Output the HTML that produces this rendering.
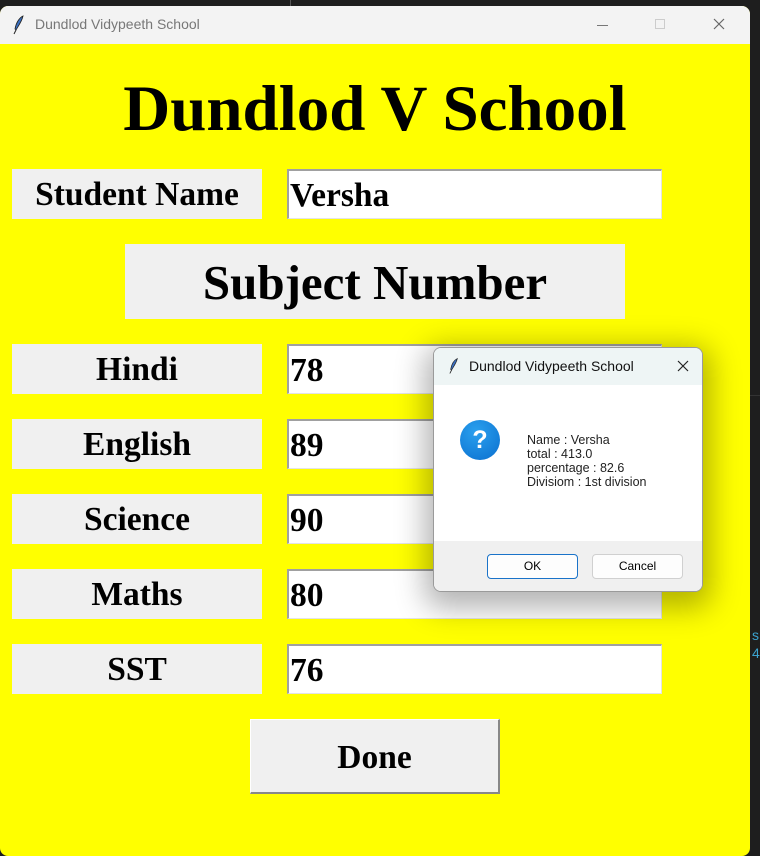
<!DOCTYPE html>
<html><head><meta charset="utf-8"><style>
*{margin:0;padding:0;box-sizing:border-box}
body{width:760px;height:856px;background:#1e1e1e;position:relative;overflow:hidden;font-family:"Liberation Serif",serif}
.win{position:absolute;left:0;top:6px;width:750px;height:850px;border-radius:8px 8px 8px 8px;overflow:hidden;background:#ffff00}
.tb{position:absolute;left:0;top:0;width:750px;height:38px;background:#f3f3f3;font-family:"Liberation Sans",sans-serif;font-size:14px;color:#777}
.abs{position:absolute}
.lbl{position:absolute;left:12px;width:250px;height:50px;background:#f0f0f0;font-weight:bold;font-size:33.5px;text-align:center;line-height:52px;color:#000}
.ent{position:absolute;left:287px;width:375px;height:50px;background:#fff;border-top:2px solid #a0a0a0;border-left:2px solid #a0a0a0;border-right:1px solid #e3e3e3;border-bottom:1px solid #e3e3e3;font-weight:bold;font-size:33.5px;line-height:49px;padding-left:1px;color:#000}
.dlg{position:absolute;left:433px;top:347px;width:270px;height:245px;border-radius:8px;overflow:hidden;background:#fff;border:1px solid #9a9a9a;box-shadow:0 8px 30px 8px rgba(0,0,0,0.3);font-family:"Liberation Sans",sans-serif}
.btn{position:absolute;top:206px;width:91px;height:25px;border-radius:4px;background:#fdfdfd;border:1px solid #d0d0d0;font-size:12px;text-align:center;line-height:23px;color:#000}
</style></head><body>
<div class="abs" style="left:290px;top:0;width:1px;height:6px;background:#555"></div>
<div class="abs" style="left:750px;top:395px;width:10px;height:1px;background:#333"></div>
<div class="abs" style="left:752px;top:626px;font-family:'Liberation Sans',sans-serif;font-size:14px;color:#3ba3d0;line-height:18px">s<br>4</div>
<div class="win">
 <div class="tb">
  <svg class="abs" style="left:13px;top:9px" width="12" height="20" viewBox="0 0 12 20"><path d="M10 1 C6 3 3 8 2 14 L3 15 C6 10 9 6 10 1Z" fill="#3a6fc0" stroke="#222" stroke-width="0.8"/><path d="M3 15 L1 19" stroke="#222" stroke-width="1"/></svg>
  <div class="abs" style="left:35px;top:10px">Dundlod Vidypeeth School</div>
  <div class="abs" style="left:597px;top:19px;width:11px;height:1px;background:#777"></div>
  <div class="abs" style="left:655px;top:13px;width:10px;height:10px;border:1px solid #ccc"></div>
  <svg class="abs" style="left:713px;top:12px" width="12" height="12"><path d="M1 1L11 11M11 1L1 11" stroke="#666" stroke-width="1.2"/></svg>
 </div>
 <div class="abs" style="left:0;top:67px;width:750px;text-align:center;font-weight:bold;font-size:65px;line-height:72px;color:#000">Dundlod V School</div>
 <div class="lbl" style="top:163px">Student Name</div>
 <div class="ent" style="top:163px">Versha</div>
 <div class="lbl" style="left:125px;top:238px;width:500px;height:75px;line-height:77px;font-size:49px">Subject Number</div>
 <div class="lbl" style="top:338px">Hindi</div><div class="ent" style="top:338px">78</div>
 <div class="lbl" style="top:413px">English</div><div class="ent" style="top:413px">89</div>
 <div class="lbl" style="top:488px">Science</div><div class="ent" style="top:488px">90</div>
 <div class="lbl" style="top:563px">Maths</div><div class="ent" style="top:563px">80</div>
 <div class="lbl" style="top:638px">SST</div><div class="ent" style="top:638px">76</div>
 <div class="lbl" style="left:250px;top:713px;width:250px;height:75px;line-height:75px;border-top:1px solid #fff;border-left:1px solid #fff;border-right:2px solid #888;border-bottom:2px solid #888">Done</div>
</div>
<div class="dlg">
 <div class="abs" style="left:0;top:0;width:270px;height:37px;background:#eef5f5"></div>
 <svg class="abs" style="left:15px;top:9px" width="10" height="18" viewBox="0 0 12 20"><path d="M10 1 C6 3 3 8 2 14 L3 15 C6 10 9 6 10 1Z" fill="#3a6fc0" stroke="#222" stroke-width="0.8"/><path d="M3 15 L1 19" stroke="#222" stroke-width="1"/></svg>
 <div class="abs" style="left:35px;top:10px;font-size:14px;color:#111">Dundlod Vidypeeth School</div>
 <svg class="abs" style="left:243px;top:12px" width="12" height="12"><path d="M1 1L11 11M11 1L1 11" stroke="#222" stroke-width="1.2"/></svg>
 <div class="abs" style="left:26px;top:72px;width:40px;height:40px;border-radius:50%;background:radial-gradient(circle at 40% 30%,#2aa0ee,#0a6fcf);color:#fff;font-weight:bold;font-size:25px;text-align:center;line-height:40px">?</div>
 <div class="abs" style="left:93px;top:85px;font-size:12.5px;line-height:14px;color:#222">Name : Versha<br>total : 413.0<br>percentage : 82.6<br>Divisiom : 1st division</div>
 <div class="abs" style="left:0;top:193px;width:270px;height:52px;background:#f0f0f0"></div>
 <div class="btn" style="left:53px;border:1px solid #1a73c9">OK</div>
 <div class="btn" style="left:158px">Cancel</div>
</div>
</body></html>
